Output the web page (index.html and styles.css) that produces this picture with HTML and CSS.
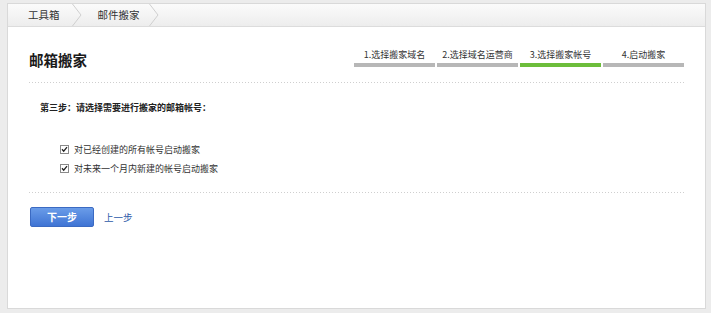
FILE: index.html
```html
<!DOCTYPE html>
<html lang="zh-CN">
<head>
<meta charset="utf-8">
<title>邮箱搬家</title>
<link rel="stylesheet" href="styles.css">
</head>
<body>
<div class="panel">
  <div class="crumbs">
    <span class="crumb crumb-first">工具箱</span>
    <svg class="chev" width="10" height="22" viewBox="0 0 10 22"><polyline points="0.5,0 9,11 0.5,22" fill="none" stroke="#cfcfcf" stroke-width="1"/></svg>
    <span class="crumb crumb-last">邮件搬家</span>
    <svg class="chev" width="10" height="22" viewBox="0 0 10 22"><polyline points="0.5,0 9,11 0.5,22" fill="none" stroke="#cfcfcf" stroke-width="1"/></svg>
  </div>
  <div class="content">
    <div class="header">
      <h1 class="title">邮箱搬家</h1>
      <div class="steps">
        <div class="step"><span class="step-label">1.选择搬家域名</span><span class="step-bar"></span></div>
        <div class="step"><span class="step-label">2.选择域名运营商</span><span class="step-bar"></span></div>
        <div class="step step-active"><span class="step-label">3.选择搬家帐号</span><span class="step-bar"></span></div>
        <div class="step"><span class="step-label">4.启动搬家</span><span class="step-bar"></span></div>
      </div>
    </div>
    <div class="divider"></div>
    <div class="body">
      <p class="prompt">第三步：请选择需要进行搬家的邮箱帐号：</p>
      <ul class="options">
        <li class="option">
          <svg class="check" width="9" height="9" viewBox="0 0 9 9"><rect x="0.5" y="0.5" width="8" height="8" fill="#fff" stroke="#8a8a8a"/><polyline points="2,4.3 3.7,6.2 7,2.2" fill="none" stroke="#222" stroke-width="1.3"/></svg>
          <span>对已经创建的所有帐号启动搬家</span>
        </li>
        <li class="option">
          <svg class="check" width="9" height="9" viewBox="0 0 9 9"><rect x="0.5" y="0.5" width="8" height="8" fill="#fff" stroke="#8a8a8a"/><polyline points="2,4.3 3.7,6.2 7,2.2" fill="none" stroke="#222" stroke-width="1.3"/></svg>
          <span>对未来一个月内新建的帐号启动搬家</span>
        </li>
      </ul>
    </div>
    <div class="divider"></div>
    <div class="actions">
      <button class="btn-primary" type="button">下一步</button>
      <a class="link" href="#">上一步</a>
    </div>
  </div>
</div>
</body>
</html>
```
FILE: styles.css
```css
html, body {
  margin: 0;
  padding: 0;
}
body {
  background: #ececec;
  font-family: "Noto Sans CJK SC", "Liberation Sans", sans-serif;
  color: #333;
  width: 711px;
  height: 313px;
  overflow: hidden;
}
.panel {
  margin: 3px 5px 0 7px;
  height: 304px;
  background: #fff;
  border: 1px solid #d9d9d9;
  box-sizing: content-box;
}
.crumbs {
  display: flex;
  align-items: center;
  height: 22px;
  background: linear-gradient(#fbfbfb, #ededed);
  border-bottom: 1px solid #dcdcdc;
}
.crumb {
  font-size: 10.5px;
  line-height: 22px;
  color: #333;
}
.crumb-first {
  padding-left: 20px;
  margin-right: 12px;
}
.crumb-last {
  margin-right: 9px;
}
.chev {
  display: block;
  margin-right: 16px;
}
.content {
  padding: 0 20px 0 21px;
}
.header {
  display: flex;
  justify-content: space-between;
  align-items: flex-start;
  height: 55px;
}
.title {
  margin: 23px 0 0 0;
  font-size: 14.5px;
  line-height: 20px;
  font-weight: bold;
  color: #1a1a1a;
}
.steps {
  display: flex;
  gap: 2px;
  margin-top: 22px;
  margin-right: 1px;
}
.step {
  display: flex;
  flex-direction: column;
  align-items: center;
  width: 81px;
}
.step-label {
  font-size: 9px;
  line-height: 12px;
  color: #333;
  white-space: nowrap;
}
.step-bar {
  display: block;
  width: 100%;
  height: 4px;
  margin-top: 2px;
  background: #b7b7b7;
}
.step-active .step-bar {
  background: #6cbd3a;
}
.divider {
  height: 1px;
  background: repeating-linear-gradient(to right, #cfcfcf 0 1px, transparent 1px 3px);
}
.body {
  padding: 18px 0 14px 0;
}
.prompt {
  margin: 0 0 0 11px;
  font-size: 9px;
  line-height: 14px;
  font-weight: bold;
  color: #222;
}
.options {
  list-style: none;
  margin: 25px 0 0 0;
  padding: 0 0 0 31px;
}
.option {
  display: flex;
  align-items: center;
  gap: 5px;
  height: 19px;
  font-size: 9px;
  color: #333;
}
.check {
  display: block;
}
.actions {
  display: flex;
  align-items: center;
  gap: 10px;
  padding-top: 14px;
}
.btn-primary {
  width: 64px;
  height: 20px;
  margin-left: 1px;
  padding: 0;
  border: 1px solid #3b6ac2;
  border-radius: 2px;
  background: linear-gradient(#6a9ce8, #3f74d4);
  color: #fff;
  font-family: "Noto Sans CJK SC", "Liberation Sans", sans-serif;
  font-size: 10px;
  font-weight: bold;
  line-height: 18px;
}
.link {
  font-size: 9.5px;
  color: #2c5aa8;
  text-decoration: none;
}
```
